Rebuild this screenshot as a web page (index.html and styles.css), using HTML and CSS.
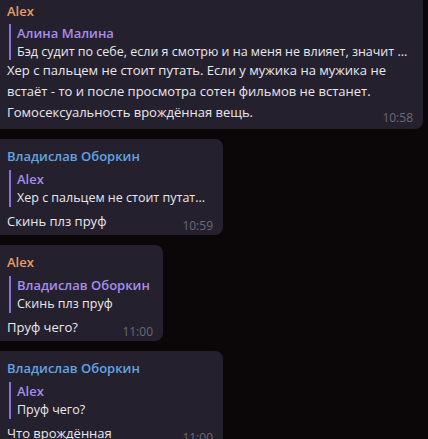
FILE: index.html
```html
<!DOCTYPE html>
<html lang="ru">
<head>
  <meta charset="UTF-8" />
  <meta name="viewport" content="width=device-width, initial-scale=1" />
  <title>Chat</title>
  <link rel="stylesheet" href="styles.css">
</head>
<body>

  <div class="chat">

    <div class="msg msg-wide msg-first">
      <div class="name orange">Alex</div>
      <div class="reply">
        <div class="reply-name">Алина Малина</div>
        <div class="reply-text">Бэд судит по себе, если я смотрю и на меня не влияет, значит ...</div>
      </div>
      <div class="text">Хер с пальцем не стоит путать. Если у мужика на мужика не встаёт - то и после просмотра сотен фильмов не встанет. Гомосексуальность врождённая вещь.<span class="time">10:58</span></div>
    </div>

    <div class="msg msg-mid">
      <div class="name blue">Владислав Оборкин</div>
      <div class="reply">
        <div class="reply-name">Alex</div>
        <div class="reply-text">Хер с пальцем не стоит путат...</div>
      </div>
      <div class="text">Скинь плз пруф<span class="time">10:59</span></div>
    </div>

    <div class="msg msg-small">
      <div class="name orange">Alex</div>
      <div class="reply">
        <div class="reply-name">Владислав Оборкин</div>
        <div class="reply-text">Скинь плз пруф</div>
      </div>
      <div class="text">Пруф чего?<span class="time">11:00</span></div>
    </div>

    <div class="msg msg-mid">
      <div class="name blue">Владислав Оборкин</div>
      <div class="reply">
        <div class="reply-name">Alex</div>
        <div class="reply-text">Пруф чего?</div>
      </div>
      <div class="text">Что врождённая<span class="time">11:00</span></div>
    </div>

  </div>

</body>
</html>
```

FILE: styles.css
```css
* {
  box-sizing: border-box;
}
html, body {
  margin: 0;
  height: 100%;
  overflow: hidden;
}
body {
  background: #0b0709;
  font-family: 'Open Sans', 'Noto Sans', sans-serif;
  font-size: 13px;
  color: #e9e8ee;
}
.chat {
  display: flex;
  flex-direction: column;
  align-items: flex-start;
  gap: 10px;
  margin-left: -8px;
}
.msg {
  background: #25202d;
  border-radius: 8px;
  padding: 8px 10px 3px 15px;
}
.msg-first {
  margin-top: -6px;
  padding-bottom: 5px;
}
.msg-first .reply {
  margin-top: 4px;
}
.msg-first .reply-text {
  line-height: 17px;
}
.msg-first .text {
  margin-top: 0;
  line-height: 21px;
}
.msg-wide {
  width: 431px;
}
.msg-mid {
  width: 231px;
}
.msg-small {
  width: 171px;
}
.name {
  font-weight: 600;
  line-height: 18px;
  white-space: nowrap;
}
.orange {
  color: #e89e66;
}
.blue {
  color: #60a5e3;
}
.reply {
  margin: 5px 0 0 2px;
  padding-left: 6px;
  border-left: 2px solid #8a73d6;
}
.reply-name {
  color: #a78dec;
  font-weight: 600;
  line-height: 19px;
  white-space: nowrap;
}
.reply-text {
  font-size: 12.5px;
  line-height: 18px;
  white-space: nowrap;
  overflow: hidden;
}
.text {
  margin-top: 3px;
  line-height: 22px;
}
.time {
  float: right;
  margin: 10px 0 0 8px;
  color: #6d6978;
  font-size: 12px;
  line-height: 12px;
}
```
